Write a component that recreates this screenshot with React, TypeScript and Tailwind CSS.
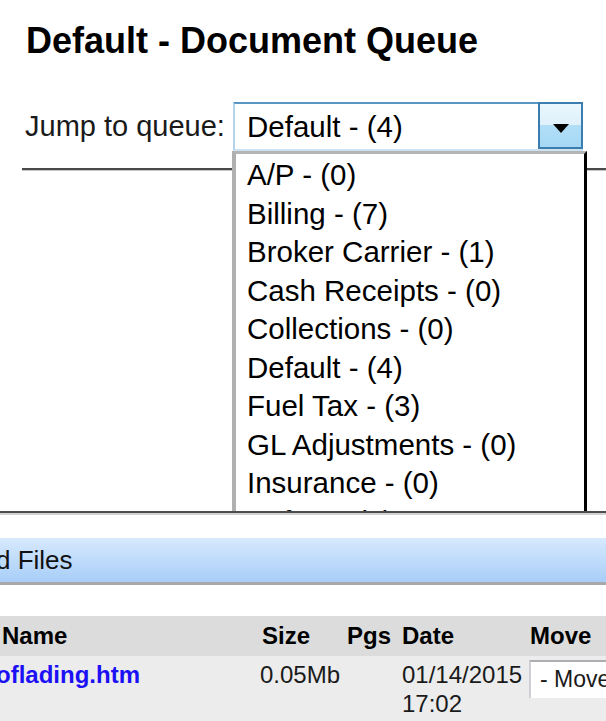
export default function App() {
  const items = [
    "A/P - (0)",
    "Billing - (7)",
    "Broker Carrier - (1)",
    "Cash Receipts - (0)",
    "Collections - (0)",
    "Default - (4)",
    "Fuel Tax - (3)",
    "GL Adjustments - (0)",
    "Insurance - (0)",
    "Safety - (0)",
  ];
  return (
    <div className="w-[606px] h-[721px] overflow-hidden bg-white text-black font-['Liberation_Sans',Arial,sans-serif]">
      {/* top frame */}
      <div className="relative h-[511px] overflow-hidden">
        <h1 className="ml-[26px] pt-[21px] text-[36px] font-bold leading-[40px] whitespace-nowrap">
          Default - Document Queue
        </h1>
        <div className="mt-[41px] flex items-start">
          <div className="w-[233px] shrink-0 pl-[25px] text-[29px] leading-[48px] text-[#1a1a1a] whitespace-nowrap">
            Jump to queue:
          </div>
          <div className="flex h-[49px] w-[350px] shrink-0 border-t-2 border-l-2 border-b-2 border-t-[#5a96c4] border-l-[#b3d3ea] border-b-[#cde3f1] bg-white">
            <div className="flex-1 pl-[12px] text-[29.5px] leading-[45px] whitespace-nowrap">Default - (4)</div>
            <div className="flex h-[47px] w-[45px] -mt-[2px] items-center justify-center border-2 border-[#3c7db0] bg-[linear-gradient(to_bottom,#e9f6fd_0%,#dff1fc_50%,#b1def7_50%,#a5d8f5_100%)]">
              <svg width="16" height="9" viewBox="0 0 16 9" className="mt-[6px]">
                <polygon points="0,0 16,0 8,9" fill="#000" />
              </svg>
            </div>
          </div>
        </div>
        <div className="mt-[17px] ml-[22px] h-[2px] bg-[#4a4a4a]" />
        <div className="ml-[22px] h-[1px] bg-[#c6c6c6]" />

        {/* open dropdown list */}
        <div className="absolute left-[232px] top-[151px] w-[355px] h-[420px] border-t-[3px] border-l-[4px] border-r-[3px] border-t-[#b4b4b4] border-l-[#b0b0b0] border-r-black bg-white pt-[2px]">
          {items.map((it) => (
            <div key={it} className="pl-[11px] text-[29.5px] leading-[38.5px] whitespace-nowrap">
              {it}
            </div>
          ))}
        </div>
      </div>

      {/* bottom frame */}
      <div className="h-[2px] bg-[#4d4d4d]" />
      <div className="h-[2px] bg-[#d3d3d3]" />
      <div className="h-[23px]" />
      <div className="h-[47px] border-b-[3px] border-b-[#a9a9a9] bg-[linear-gradient(to_bottom,#d7e9fd,#a8cef8)]">
        <div className="-ml-[4px] text-[26px] leading-[44px] whitespace-nowrap text-[#111]">d Files</div>
      </div>
      <div className="h-[31px]" />
      <div className="flex h-[40px] bg-[#dcdcdc] text-[24px] font-bold leading-[40px] whitespace-nowrap">
        <div className="w-[262px] pl-[2px]">Name</div>
        <div className="w-[85px]">Size</div>
        <div className="w-[55px]">Pgs</div>
        <div className="w-[128px]">Date</div>
        <div className="flex-1">Move</div>
      </div>
      <div className="flex h-[70px] bg-[#ececec] pt-[4px] text-[24px] leading-[29px] text-[#1a1a1a]">
        <div className="w-[262px] shrink-0">
          <span className="-ml-[4px] block font-bold text-[#1c10f5] whitespace-nowrap">oflading.htm</span>
        </div>
        <div className="w-[85px] shrink-0">
          <span className="-ml-[2px] block whitespace-nowrap">0.05Mb</span>
        </div>
        <div className="w-[55px] shrink-0" />
        <div className="w-[128px] shrink-0">01/14/2015 17:02</div>
        <div className="-ml-[1px] h-[38px] w-[140px] shrink-0 border-t-2 border-l-2 border-t-[#adadb2] border-l-[#cfcfd4] bg-white pl-[9px] text-[23px] leading-[34px] whitespace-nowrap">
          - Move
        </div>
      </div>
    </div>
  );
}
